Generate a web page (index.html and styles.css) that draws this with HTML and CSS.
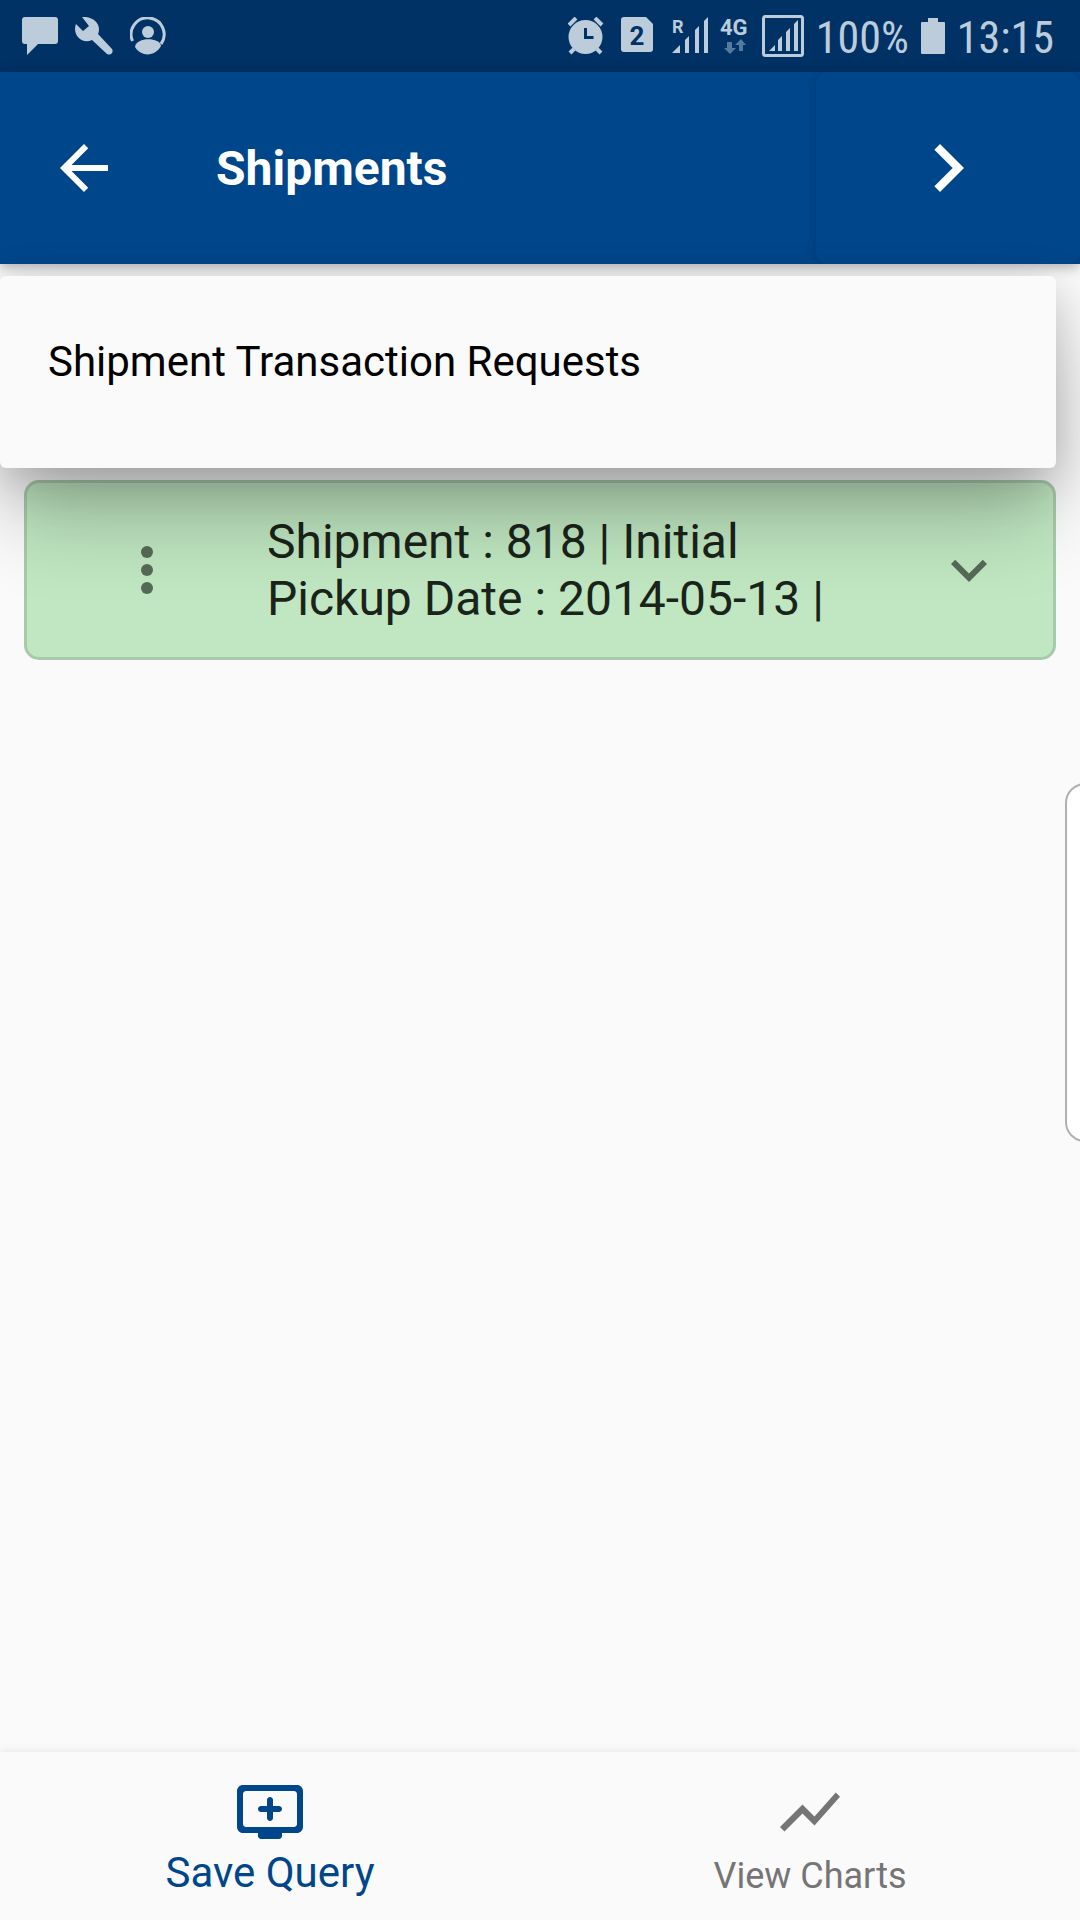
FILE: index.html
```html
<!DOCTYPE html>
<html lang="en">
<head>
<meta charset="utf-8">
<meta name="viewport" content="width=device-width, initial-scale=1">
<title>Shipments</title>
<link rel="stylesheet" href="styles.css">
</head>
<body>
<div class="status-bar">
  <div class="status-group status-notifications">
    <svg width="36" height="38" viewBox="0 0 36 38" aria-hidden="true"><path d="M3 0h30q3 0 3 3v21q0 3-3 3H16L5 38V27H3q-3 0-3-3V3q0-3 3-3z"/></svg>
    <svg width="38" height="38" viewBox="0 0 38 38" aria-hidden="true"><path d="M7 0C16-1 24 5 24 12q0 3-1 5l14 15c2 3-1 7-5 5L17 23C8 27 0 20 0 12q0-3 1-5l7 7 6-5z"/></svg>
    <svg width="36" height="38" viewBox="0 0 36 38" aria-hidden="true"><path d="M2.500 24A16.500 16.500 0 1 1 31 27" fill="none" stroke="currentColor" stroke-width="3"/><circle cx="18" cy="15" r="6"/><path d="M5 30c1-10 25-10 26-1-6 11-20 11-26 1z"/></svg>
  </div>
  <div class="status-group status-system">
    <svg width="41" height="38" viewBox="0 0 41 38" aria-hidden="true"><circle cx="17.500" cy="20" r="17"/><path d="M1 8l7-7M34 8l-7-7" stroke="currentColor" stroke-width="4"/><path d="M6 32l-4 4M29 32l4 4" stroke="currentColor" stroke-width="4"/><path d="M17.500 11v9.500h8" fill="none" stroke="#003266" stroke-width="3"/></svg>
    <svg width="38" height="38" viewBox="0 0 38 38" aria-hidden="true"><path d="M3 0h22l7 7v25q0 3-3 3H3q-3 0-3-3V3q0-3 3-3z"/><text class="sim-text" x="16" y="28" text-anchor="middle">2</text></svg>
    <svg width="37" height="48" viewBox="0 -5 37 48" aria-hidden="true"><text class="roaming-text" x="1" y="16">R</text><path d="M1 36l8-8v8zM14 36V23l4-4v17zM24 36V13l4-4v27zM33 36V4l4-4v36z"/></svg>
    <svg width="30" height="48" viewBox="0 -5 30 48" aria-hidden="true"><text class="network-text" x="0" y="18">4G</text><path class="traffic" d="M7 25h5v6h4l-6 6-6-6h3zM19 34v-6h-4l6-6 5 6h-3v6z"/></svg>
    <svg width="42" height="42" viewBox="0 0 42 42" aria-hidden="true"><rect x="1.500" y="1.500" width="39" height="39" rx="2" fill="none" stroke="currentColor" stroke-width="3"/><path d="M7 36l6-6v6zM16 36V25l4-4v15zM24 36V17l4-4v23zM32 36V9l4-4v31z"/></svg>
    <span class="status-text">100%</span>
    <svg width="24" height="36" viewBox="0 0 24 36" aria-hidden="true"><path d="M7 0h10v4h6q1 0 1 1v30q0 1-1 1H1q-1 0-1-1V5q0-1 1-1h6z"/></svg>
    <span class="status-text">13:15</span>
  </div>
</div>

<header class="app-bar">
  <button class="back-button" type="button" aria-label="Back">
    <svg width="72" height="72" viewBox="0 0 24 24" aria-hidden="true"><path d="M20 11H7.830l5.590-5.590L12 4l-8 8 8 8 1.410-1.410L7.830 13H20z"/></svg>
  </button>
  <h1 class="title">Shipments</h1>
  <button class="next-button" type="button" aria-label="Next">
    <svg width="96" height="96" viewBox="0 0 24 24" aria-hidden="true"><path d="M10 6L8.590 7.410 13.170 12l-4.580 4.590L10 18l6-6z"/></svg>
  </button>
</header>

<main class="content">
  <div class="menu" role="menu">
    <button class="menu-item" type="button" role="menuitem">Shipment Transaction Requests</button>
  </div>
  <section class="shipment-card">
    <button class="more-button" type="button" aria-label="More options">
      <svg width="72" height="72" viewBox="0 0 24 24" aria-hidden="true"><circle cx="12" cy="6" r="2"/><circle cx="12" cy="12" r="2"/><circle cx="12" cy="18" r="2"/></svg>
    </button>
    <p class="shipment-text">Shipment : 818 | Initial<br>Pickup Date : 2014-05-13 |</p>
    <button class="expand-button" type="button" aria-label="Expand">
      <svg width="72" height="72" viewBox="0 0 24 24" aria-hidden="true"><path d="M16.590 8.590L12 13.170 7.410 8.590 6 10l6 6 6-6z"/></svg>
    </button>
  </section>
</main>

<nav class="bottom-nav">
  <a class="nav-item nav-active" href="#save">
    <svg width="72" height="72" viewBox="0 0 24 24" aria-hidden="true"><path fill-rule="evenodd" d="M21 3H3c-1.110 0-2 .890-2 2v12c0 1.100.890 2 2 2h5v1c0 .550.450 1 1 1h6c.550 0 1-.450 1-1v-1h5c1.100 0 1.990-.900 1.990-2L23 5c0-1.110-.900-2-2-2zm-1 14H4c-.550 0-1-.450-1-1V6c0-.550.450-1 1-1h16c.550 0 1 .450 1 1v10c0 .550-.450 1-1 1zm-4-6c0 .550-.450 1-1 1h-2v2c0 .550-.450 1-1 1s-1-.450-1-1v-2H9c-.550 0-1-.450-1-1s.450-1 1-1h2V8c0-.550.450-1 1-1s1 .450 1 1v2h2c.550 0 1 .450 1 1z"/></svg>
    <span class="nav-label">Save Query</span>
  </a>
  <a class="nav-item" href="#charts">
    <svg width="72" height="72" viewBox="0 0 24 24" aria-hidden="true"><path d="M3.500 18.490l6-6.010 4 4L22 6.920l-1.410-1.410-7.090 7.970-4-4L2 16.990z"/></svg>
    <span class="nav-label nav-label-small">View Charts</span>
  </a>
</nav>

<div class="edge-panel"><div class="edge-handle"></div></div>
</body>
</html>
```
FILE: styles.css
```css
* {
  box-sizing: border-box;
}

body {
  margin: 0;
  min-height: 100vh;
  position: relative;
  display: flex;
  flex-direction: column;
  overflow-x: hidden;
  background: #fafafa;
  color: #000;
  font-family: Roboto, "Liberation Sans", sans-serif;
}

button {
  margin: 0;
  padding: 0;
  border: 0;
  background: none;
  color: inherit;
  font: inherit;
  display: flex;
  align-items: center;
  justify-content: center;
}

svg {
  display: block;
  flex: none;
  fill: currentColor;
}

.status-bar {
  height: 72px;
  padding: 0 26px 0 22px;
  display: flex;
  align-items: center;
  justify-content: space-between;
  background: #003266;
  color: #bdccdb;
}

.status-group {
  display: flex;
  align-items: center;
}

.status-notifications {
  gap: 17px;
}

.status-system {
  gap: 12px;
}

.status-text {
  padding-top: 4px;
  font-family: "Roboto Condensed", "Liberation Sans Narrow", Roboto, sans-serif;
  font-size: 44px;
  line-height: 68px;
}

.sim-text {
  fill: #003266;
  font-size: 26px;
  font-weight: 700;
}

.roaming-text {
  font-size: 18px;
  font-weight: 700;
}

.network-text {
  font-size: 22px;
  font-weight: 700;
}

.traffic {
  fill: #557a9f;
}

.app-bar {
  height: 192px;
  display: flex;
  align-items: stretch;
  background: #00468b;
  color: #fff;
  box-shadow: 0 3px 12px rgba(0, 0, 0, 0.3);
}

.back-button {
  width: 168px;
}

.title {
  flex: 1;
  margin: 0 0 0 48px;
  font-size: 48px;
  font-weight: 700;
  line-height: 194px;
}

.next-button {
  width: 264px;
  border-radius: 12px;
  background: #00468b;
  box-shadow: 0 0 9px rgba(0, 0, 0, 0.2);
  clip-path: inset(0 0 0 -12px);
}

.content {
  flex: 1;
  padding: 12px 24px 24px 0;
}

.menu {
  position: relative;
  padding: 48px;
  height: 192px;
  border-radius: 6px;
  background: #fafafa;
  box-shadow: 0 54px 84px -6px rgba(0, 0, 0, 0.24), 0 12px 48px rgba(0, 0, 0, 0.2);
}

.menu-item {
  font-size: 42px;
  line-height: 76px;
}

.shipment-card {
  margin: 12px 0 0 24px;
  height: 180px;
  padding: 0 48px;
  display: flex;
  align-items: center;
  border: 3px solid #a9caaa;
  border-radius: 15px;
  background: #c0e7c1;
  color: #1a241a;
}

.more-button {
  width: 144px;
  height: 144px;
  color: #566b57;
}

.shipment-text {
  flex: 1;
  margin: 0 0 0 48px;
  font-size: 48px;
  line-height: 57px;
}

.expand-button {
  color: #566b57;
}

.bottom-nav {
  display: flex;
  background: #fafafa;
  box-shadow: 0 0 9px rgba(0, 0, 0, 0.1);
}

.nav-item {
  flex: 1;
  padding: 24px 0;
  display: flex;
  flex-direction: column;
  align-items: center;
  color: #757575;
  text-decoration: none;
}

.nav-active {
  color: #00468b;
}

.nav-label {
  padding-top: 2px;
  font-size: 42px;
  line-height: 46px;
}

.nav-label-small {
  padding-top: 8px;
  font-size: 36px;
  line-height: 40px;
}

.edge-panel {
  position: absolute;
  top: 783px;
  right: 0;
  width: 15px;
  height: 359px;
  overflow: hidden;
}

.edge-handle {
  width: 60px;
  height: 100%;
  border: 2px solid #b0b0b0;
  border-radius: 20px;
  background: #fff;
}
```
